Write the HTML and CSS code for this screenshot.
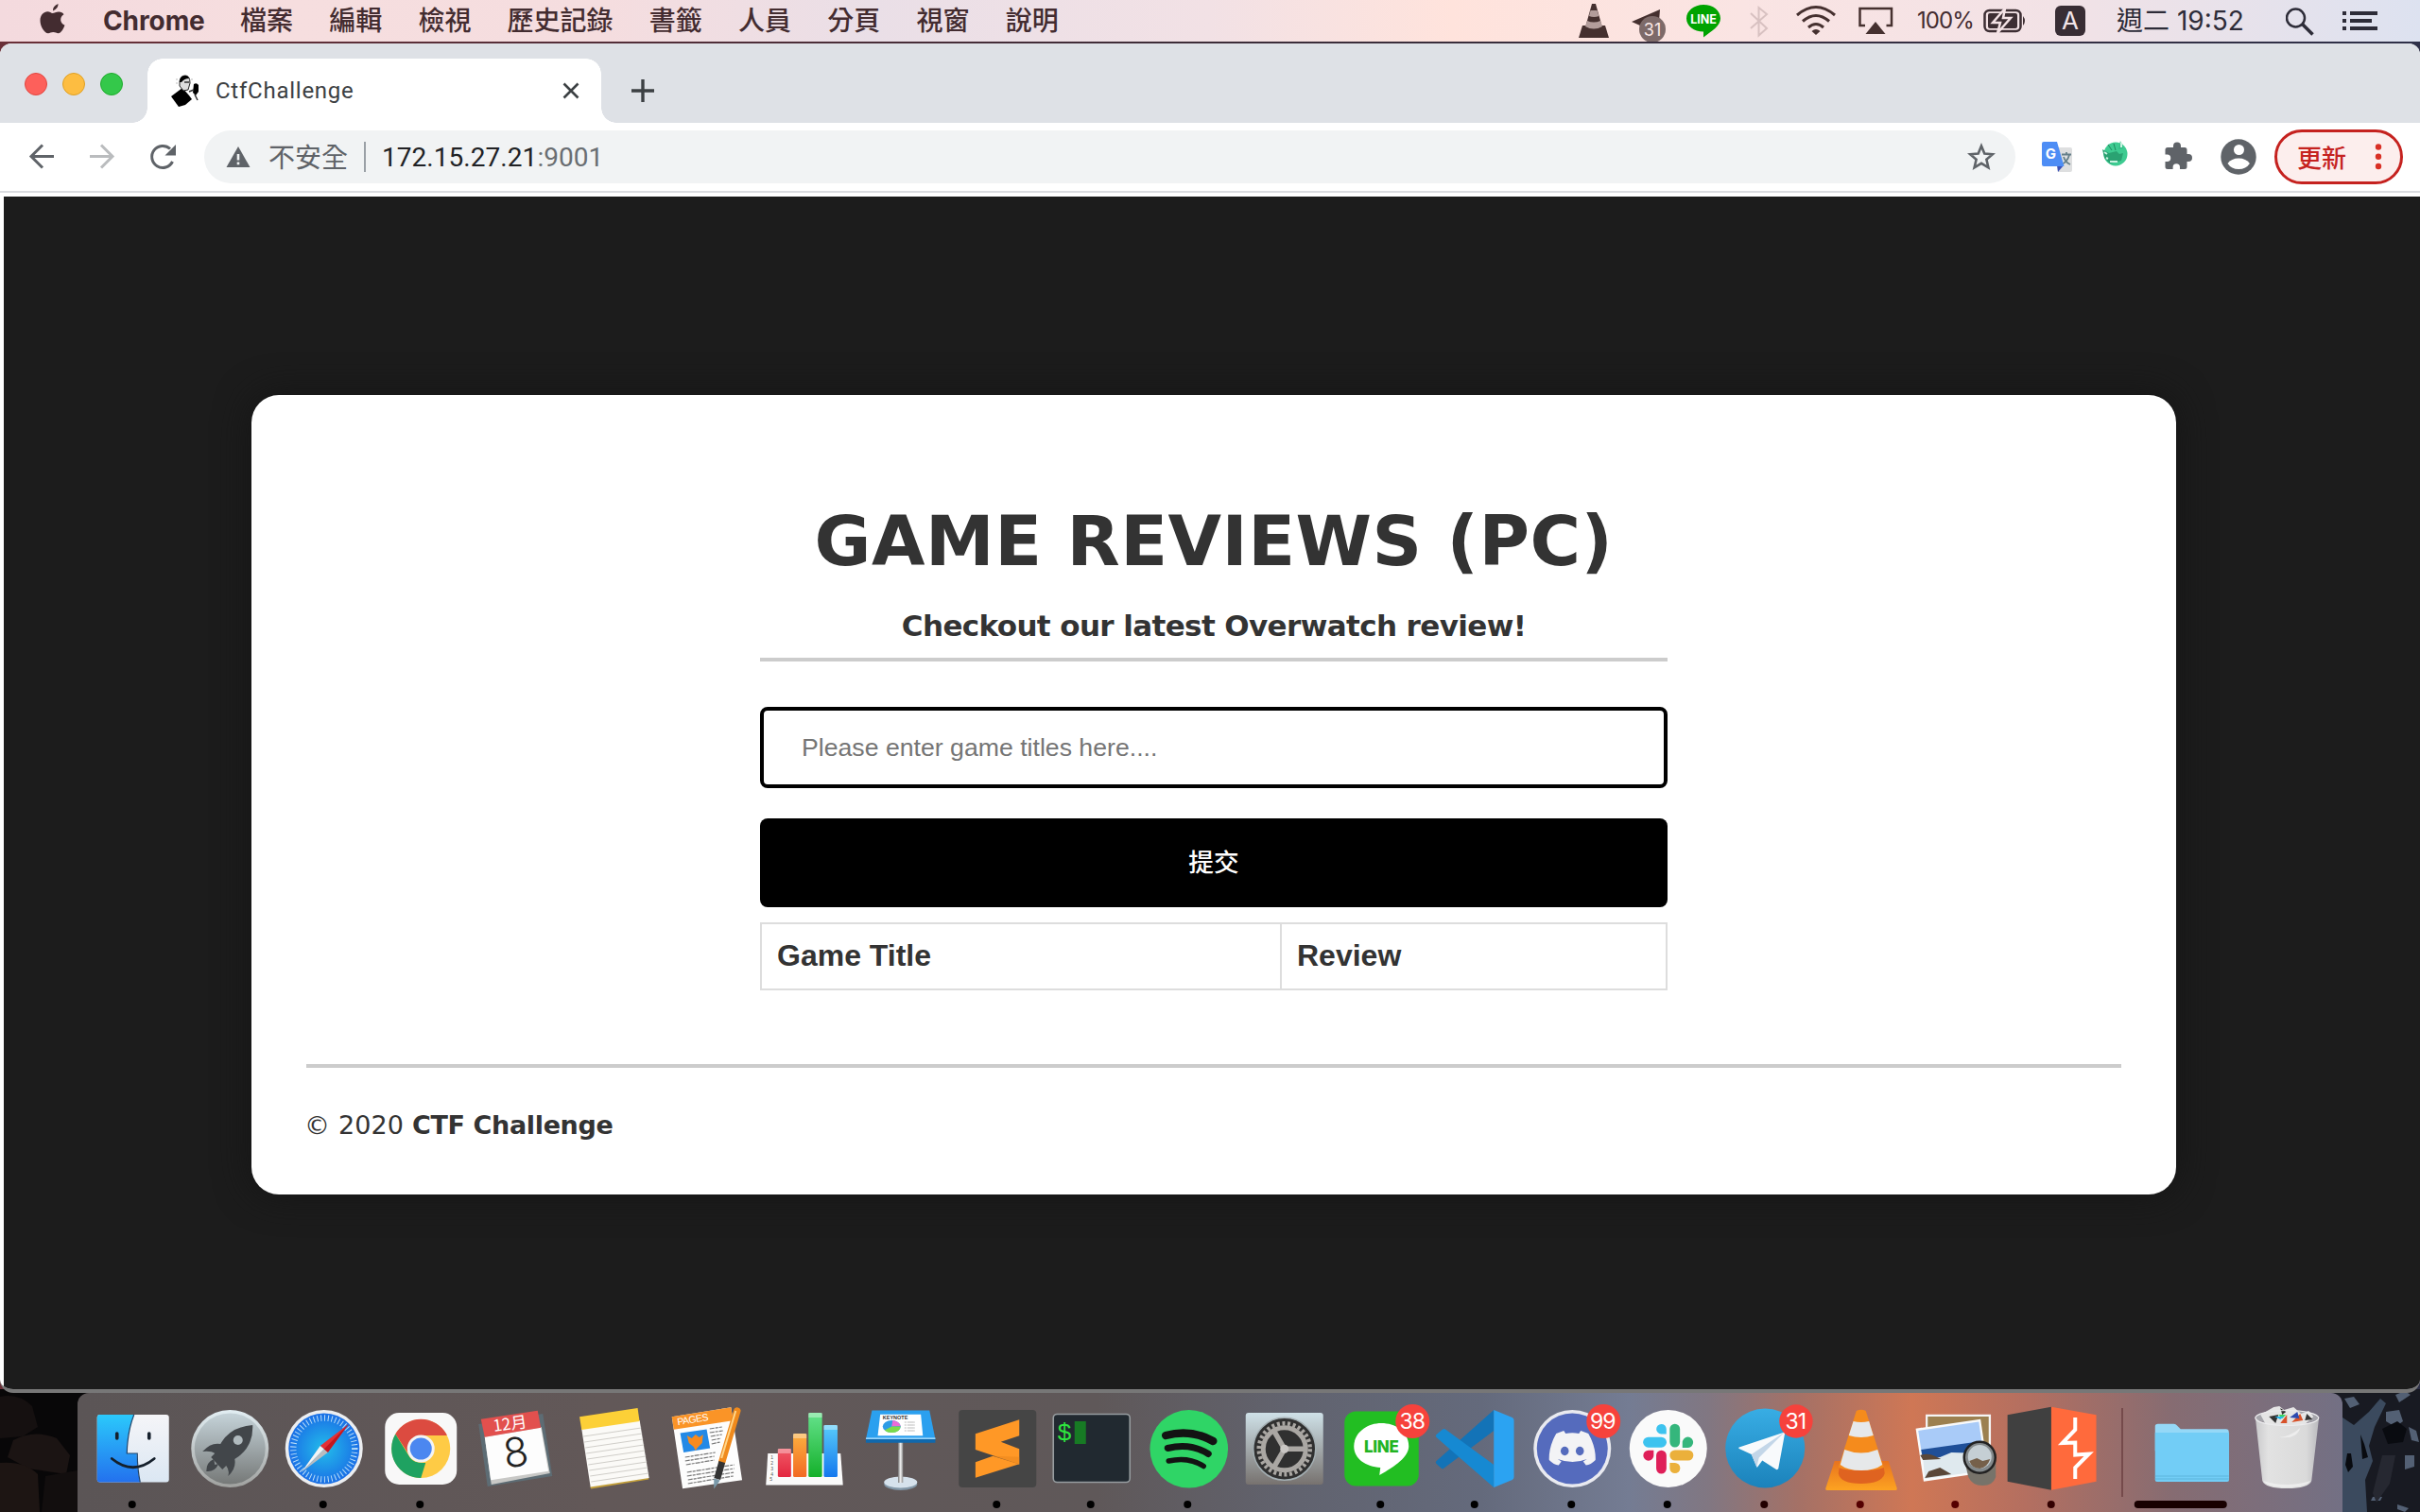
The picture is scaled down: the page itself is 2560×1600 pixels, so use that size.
FILE: index.html
```html
<!DOCTYPE html>
<html lang="zh-Hant">
<head>
<meta charset="utf-8">
<title>CtfChallenge</title>
<link rel="stylesheet" href="styles.css">
</head>
<body>
<header class="menubar">
  <svg class="mi" width="67" height="44" viewBox="42 0 67 44"><path fill="#432c30" d="M61.500 4q.5 5-5.500 7.500q-.5-5 5.500-7.500zM55.500 14c2 0 4-1.700 7-1.500c2 .1 4 1 5 2.700c-5 3-4 9.500 1 11.600c-1.500 4-4 8.500-6.800 8.500c-2 0-3-1.200-5.400-1.200s-3.500 1.200-5.300 1.200c-4 0-8.500-7.500-8.500-13.500s4-9.500 7.800-9.500c2.200 0 4 1.700 5.200 1.700z"/></svg>
  <b class="app">Chrome</b><span>檔案</span><span>編輯</span><span>檢視</span><span>歷史記錄</span><span>書籤</span><span>人員</span><span>分頁</span><span>視窗</span><span>說明</span>
  <svg class="mi" width="358" height="44" viewBox="1670 0 358 44">
    <g fill="#45302f"><path d="M1674 27h24l4 13h-32z"/><path d="M1684 4h4l7 25q-9 5-18 0z"/><g fill="#b39d9b"><path d="M1682.500 11h7l2 6q-5.500 2-10.500 0z"/><path d="M1679 22q7 3 14 0l2 6q-9 5-18 0z"/></g>
    <path d="M1756 10l-30 13l9 4l11-8-7 9 3 5 12 2z"/></g>
    <circle cx="1748" cy="31" r="14" fill="#7d6a69"/><text x="1748" y="37.500" text-anchor="middle" class="t31">31</text>
    <path fill="#00a300" d="M1802 5c10 0 18 6 18 14.500c0 8-9 13-18 20v-6c-10 0-18-6-18-14s8-14.500 18-14.500z"/><text x="1802" y="24.500" text-anchor="middle" class="tline">LINE</text>
    <path fill="none" stroke="#d8c1c1" stroke-width="2" d="M1852 14l17 16-8.500 7.500v-29.500l8.500 7-17 15"/>
    <g fill="none" stroke="#45302f" stroke-width="3"><path d="M1901 16q20-17 40 0M1907 22.500q14-12 28 0M1913 29q8-7 16 0"/></g><path fill="#45302f" d="M1916.500 33q4.500-4 9 0l-4.500 4z"/>
    <path fill="none" stroke="#45302f" stroke-width="2.500" d="M1973 27h-5.500v-18h33.500v18h-5.500"/><path fill="#45302f" d="M1984 23l10.500 13h-21z"/>
  </svg>
  <span class="pct">100%</span>
  <svg class="mi" width="142" height="44" viewBox="2098 0 142 44">
    <rect x="2099.500" y="11" width="38" height="22" rx="5" fill="none" stroke="#3d2e33" stroke-width="2.500"/><rect x="2103" y="14" width="31" height="16" rx="2" fill="#3d2e33"/><path fill="#3d2e33" d="M2140 17q4 5 0 10z"/><path d="M2121 9l-13 15h8l-3 11 14-16h-8z" fill="#3d2e33" stroke="#f4e2e5" stroke-width="2.500"/>
    <rect x="2174" y="6" width="32" height="32" rx="6" fill="#382d34"/><text x="2190" y="31" text-anchor="middle" class="ta">A</text>
  </svg>
  <span class="clock">週二 19:52</span>
  <svg class="mi" width="142" height="44" viewBox="2418 0 142 44"><circle cx="2428.500" cy="19" r="9.500" fill="none" stroke="#2d2c38" stroke-width="2.500"/><path d="M2435.500 25.500l11 11" stroke="#2d2c38" stroke-width="3.500"/><path stroke="#2d2c38" stroke-width="4" d="M2478 14h4M2486 14h29M2478 22h4M2486 22h23M2478 30h4M2486 30h29"/></svg>
</header>

<main class="window">
  <div class="tabstrip">
    <div class="lights"><i class="red"></i><i class="yellow"></i><i class="green"></i></div>
    <div class="tab">
      <svg width="36" height="36" viewBox="178 78 36 36"><path d="M181 102l12-9 7 8 3 4-7 6-7 2z"/><path d="M190 86q1-6 6-6t5 8l-2 7-5 1-4-5z" fill="#ddd" stroke="#222"/><path d="M190 87q0-8 7-7 3 1 3 3-5 0-8 4z"/><path d="M205 89q3-2 5 1v7l-3 4-3-3z"/><path d="M206 100l3 6M200 97l5-2M195 87l5 0" stroke="#333" stroke-width="1.500"/><path d="M186 84h2M186 88h2M202 84h2" stroke="#bbb"/></svg>
      <span class="tabname">CtfChallenge</span>
      <svg width="18" height="18" viewBox="0 0 18 18"><path d="M1.500 1.500l15 15m0-15l-15 15" stroke="#3c4043" stroke-width="2.600"/></svg>
    </div>
    <svg class="plus" width="24" height="24" viewBox="0 0 24 24"><path d="M12 0v24M0 12h24" stroke="#3c4043" stroke-width="3.400"/></svg>
  </div>
  <div class="toolbar">
    <svg width="216" height="72" viewBox="0 130 216 72" fill="none" stroke-width="3"><path stroke="#5f6368" d="M57 165.500H33.500M45 153.500l-12 12 12 12"/><path stroke="#babcbe" d="M95 165.500h23.500M107 153.500l12 12-12 12"/><path stroke="#5f6368" d="M182.500 171a11.500 11.500 0 1 1-2.500-13.500"/><path fill="#5f6368" d="M186 153v11.500h-11.500z"/></svg>
    <div class="omnibox">
      <svg width="26" height="24" viewBox="0 0 26 24"><path fill="#5f6368" d="M13 1l12.500 22h-25z"/><path stroke="#f1f3f4" stroke-width="2.600" d="M13 9v6.500M13 17.500v2.700"/></svg>
      <span class="unsafe">不安全</span><i class="bar"></i><span class="url">172.15.27.21<em>:9001</em></span>
      <svg class="star" width="30" height="30" viewBox="0 0 30 30"><path fill="none" stroke="#5f6368" stroke-width="2.600" d="M15 3.500l3.300 8 8.700.7-6.600 5.600 2 8.500-7.400-4.500-7.400 4.500 2-8.500-6.600-5.600 8.700-.7z"/></svg>
    </div>
    <svg width="274" height="72" viewBox="2132 130 274 72">
      <path fill="#dedfe0" d="M2174 156h16a2 2 0 0 1 2 2v22a2 2 0 0 1-2 2h-13z"/><path d="M2181 163.500h10M2186 161v3M2189 164q-2 7-8 10M2183 166q2 6 7 8" fill="none" stroke="#66808a" stroke-width="1.800"/><path fill="#3c52b8" d="M2176 175h7l-6 7z"/><path fill="#4d8df5" d="M2162 150h14l7.500 26h-21.500a2 2 0 0 1-2-2v-22a2 2 0 0 1 2-2z"/><text x="2169.500" y="168" text-anchor="middle" class="tg">G</text>
      <circle cx="2238" cy="163" r="12.500" fill="#3ecb91"/><path fill="#2aa272" d="M2224 158l7 4 8-2 3 3 4-1-2 8-12 3-6-6z"/><path fill="#35bd87" d="M2241 158l2-9 3 8z"/><path stroke="#c8f2e0" stroke-width="2" d="M2232 171h8M2244 151v5M2226 161l3 2M2228 167l2 1" fill="none"/><path stroke="#1f8760" d="M2230 153l4 6M2236 152l2 7" fill="none"/>
      <path fill="#5f6368" d="M2293 156h6v-1.500a4 4 0 0 1 8 0v1.500h4a2.500 2.500 0 0 1 2.500 2.500v4.500h1.500a4 4 0 0 1 0 8h-1.500v5.500a2.500 2.500 0 0 1-2.500 2.500h-5v-2a3.700 3.700 0 0 0-7.400 0v2h-5.600a2.500 2.500 0 0 1-2.500-2.500v-5.500h2a3.700 3.700 0 0 0 0-7.500h-2v-5a2.500 2.500 0 0 1 2.500-2.500z"/>
      <circle cx="2368" cy="166" r="18.700" fill="#5f6368"/><circle cx="2368.500" cy="158.500" r="5.500" fill="#fff"/><path fill="#fff" d="M2356.500 173q4-5.500 11.700-5.500t11.700 5.500q-4 6-11.700 6t-11.700-6z"/>
    </svg>
    <div class="update"><span>更新</span><svg width="8" height="30" viewBox="0 0 8 30" fill="#d93025"><circle cx="4" cy="4.500" r="3.200"/><circle cx="4" cy="14.800" r="3.200"/><circle cx="4" cy="25" r="3.200"/></svg></div>
  </div>
  <div class="page">
    <section class="card">
      <div class="col">
        <h1><span>GAME REVIEWS (PC)</span></h1>
        <h2>Checkout our latest Overwatch review!</h2>
        <hr>
        <input class="field" type="text" placeholder="Please enter game titles here....">
        <button class="submit">提交</button>
        <div class="table"><div>Game Title</div><div>Review</div></div>
      </div>
      <hr>
      <footer>© 2020 <b>CTF Challenge</b></footer>
    </section>
  </div>
</main>

<div class="desk">
<svg class="wall" width="82" height="130" viewBox="0 1470 82 130"><path fill="#080708" d="M0 1470h82v130H0z"/><path fill="#151010" d="M0 1478q20-4 34 10l6 22-16 10-24 2z"/><path fill="#1b1413" d="M14 1524q22-12 46-2l14 18-4 20-40-6-22-12z"/><path fill="#1d1513" d="M0 1548q26-2 40 12l2 40H0z"/><path fill="#120e0e" d="M48 1562l34-6v44H44z"/></svg>
<nav class="dock">
<svg viewBox="90.250 1474 101.500 126"><defs><linearGradient id="fb" x2="0" y2="1"><stop stop-color="#2bc9fb"/><stop offset="1" stop-color="#2371ee"/></linearGradient><linearGradient id="fw" x2="0" y2="1"><stop stop-color="#f5f5f8"/><stop offset="1" stop-color="#dbe7f3"/></linearGradient></defs><rect x="103" y="1497" width="76" height="71.500" rx="3" fill="url(#fw)"/><path fill="url(#fb)" d="M106 1497h36q-7 18-7.500 41h10.500q0 16 3.500 30.500h-42.500a3 3 0 0 1-3-3v-65.500a3 3 0 0 1 3-3z"/><path d="M142 1497q-7 18-7.500 41h11q0 16 3 30.500" fill="none" stroke="#23466b" stroke-width="1.200"/><path d="M124 1517v5M158 1517v5" stroke="#15202c" stroke-width="3.600" stroke-linecap="round"/><path d="M118.500 1543.500q22.500 18.500 45 0" fill="none" stroke="#15202c" stroke-width="2.800" stroke-linecap="round"/><circle cx="140" cy="1592" r="4"/></svg>
<svg viewBox="191.750 1474 101.500 126"><defs><linearGradient id="lp" x2="0" y2="1"><stop stop-color="#c5d3d9"/><stop offset="1" stop-color="#767978"/></linearGradient><linearGradient id="lr" x2="0" y2="1"><stop stop-color="#e2eef3"/><stop offset="1" stop-color="#a0a19f"/></linearGradient></defs><circle cx="243" cy="1533" r="41" fill="url(#lr)"/><circle cx="243" cy="1533" r="37.500" fill="url(#lp)"/><path fill="#42464a" d="M267 1508q-24 2-34 20-10-2-19 8 9-1 13 2l-4 4 12 13 4-4q4 5 2 11 9-8 7-18 20-12 19-36z"/><path fill="#42464a" d="M226 1544q-8 3-8 13 9 1 13-8l-4 1z"/><circle cx="251.500" cy="1524" r="5" fill="#b0babe"/></svg>
<svg viewBox="293.250 1474 101.500 126"><defs><radialGradient id="sf"><stop stop-color="#23bdea"/><stop offset="1" stop-color="#1a6fe6"/></radialGradient></defs><circle cx="343" cy="1533" r="41" fill="#eceef0"/><circle cx="343" cy="1533" r="37.500" fill="url(#sf)"/><circle cx="343" cy="1533" r="32.500" fill="none" stroke="#d6eefb" stroke-width="6.500" stroke-dasharray="1 2.830" opacity=".85"/><path fill="#e33035" d="M369 1507l-30 23 8 7z"/><path fill="#c3161f" d="M369 1507l-26 26.500 4 3.500z"/><path fill="#f4f4f4" d="M319 1558l20-28 4 3.500z"/><path fill="#b9bcc0" d="M319 1558l24-24.500 4 3.500z"/><circle cx="342" cy="1592" r="4"/></svg>
<svg viewBox="394.750 1474 101.500 126"><rect x="407" y="1495" width="76" height="76" rx="15" fill="#f8f8f8"/><circle cx="445" cy="1533" r="31" fill="#fecb45"/><path fill="#dc4b40" d="M418 1517.500a31 31 0 0 1 54 0l.5 1.500h-27.500l-12 21z"/><path fill="#1fa261" d="M418 1517.500l15.500 25q4 6 16.500 5.500l-5 16a31 31 0 0 1-27-46.500z"/><circle cx="445" cy="1533" r="14.500" fill="#f4f4f4"/><circle cx="445" cy="1533" r="11.500" fill="#4b87f0"/><circle cx="444" cy="1592" r="4"/></svg>
<svg viewBox="496.250 1474 101.500 126"><path fill="#5d6c74" d="M506.500 1507l68-11 10 66-68.500 11z"/><path fill="#c8c8c6" d="M513 1520l60-10 9 49-62 12z"/><path fill="#fdfdfd" d="M513 1520.700l59.400-10 8 46-61 9.600z"/><path fill="#e2504e" d="M509 1501.700l60-9 3.400 18-59.400 10z"/><g transform="rotate(-8 546 1530)"><text x="543" y="1512" text-anchor="middle" class="cm">12月</text><text x="545" y="1552" text-anchor="middle" class="cd">8</text></g></svg>
<svg viewBox="597.750 1474 101.500 126"><path fill="#c4a03a" d="M624 1573l62-9.500 0 2-61 10z"/><path fill="#fbfaf7" d="M615 1512l61.400-9 10 61-62 9.500z"/><path fill="#fcd037" d="M612.800 1499.300l61.500-9.300 2 14-61.300 9z"/><path d="M617 1520l61-9M618 1526l61-9M619 1532l61-9M620 1538l61-9M621 1544l61-9M622 1550l61-9M623 1556l61-9M624 1562l61-9M625 1568l61-9" stroke="#d0cec9"/></svg>
<svg viewBox="699.250 1474 101.500 126"><path fill="#fdfdfd" d="M711 1499.300l62.600-10 11.700 77-63 9z"/><path fill="#fa9427" d="M711 1499.300l62.600-10 2 14-62.600 9.500z"/><text transform="rotate(-9 718 1507)" x="717" y="1508" class="pg">PAGES</text><path fill="#2389e6" d="M719.800 1516.500l28-4 3.600 20-28 4.500z"/><path fill="#f78a1d" d="M727 1519l5 3 4-4 4 3 4-3-1 9-5 5-2 3-2-4-5-4z"/><path stroke="#777" stroke-width="1.200" stroke-dasharray="5 1 3 1" d="M751 1512l13-2M751 1516l14-2M752 1520l12-2M753 1524l10-2M753 1528l9-2M725 1542l32-5M725 1546l31-5M726 1550l30-5M727 1558l50-8M727 1562l50-8M728 1566l49-8M728 1570l48-8"/><path d="M780 1493l-16 54" stroke="#f08a1c" stroke-width="7.500" stroke-linecap="round"/><path d="M778.500 1493l-15 50" stroke="#ffd68a" stroke-width="2"/><path d="M764 1547l-5 18" stroke="#333" stroke-width="7"/><path fill="#7a99aa" d="M755.500 1564.500l6.500 2-6.500 9z"/></svg>
<svg viewBox="800.750 1474 101.500 126"><defs><linearGradient id="nr" x2="0" y2="1"><stop stop-color="#f05a66"/><stop offset="1" stop-color="#e3263f"/></linearGradient><linearGradient id="no" x2="0" y2="1"><stop stop-color="#fcb03f"/><stop offset="1" stop-color="#f26a23"/></linearGradient><linearGradient id="ng" x2="0" y2="1"><stop stop-color="#65e28c"/><stop offset="1" stop-color="#14b02a"/></linearGradient><linearGradient id="nb" x2="0" y2="1"><stop stop-color="#59ccfa"/><stop offset="1" stop-color="#1478ee"/></linearGradient></defs><path fill="#fafafa" d="M812 1538h77l2.500 33.500h-81.500z"/><text class="nn"><tspan x="815" y="1544">1</tspan><tspan x="815" y="1550">2</tspan><tspan x="815" y="1556">3</tspan><tspan x="815" y="1562">4</tspan><tspan x="814" y="1567">5</tspan></text><rect x="822.600" y="1533" width="14" height="30" rx="1.500" fill="url(#nr)"/><rect x="838.800" y="1517" width="14.200" height="46" rx="1.500" fill="url(#no)"/><rect x="855" y="1495" width="14.400" height="68" rx="1.500" fill="url(#ng)"/><rect x="871.200" y="1508" width="14.500" height="55" rx="1.500" fill="url(#nb)"/><path opacity=".35" fill="#fff" d="M822.600 1533h14v5h-14zM838.800 1517h14.200v5h-14.200zM855 1495h14.400v5h-14.400zM871.200 1508h14.500v5h-14.500z"/></svg>
<svg viewBox="902.250 1474 101.500 126"><defs><linearGradient id="kn"><stop stop-color="#777"/><stop offset=".5" stop-color="#f2f2f2"/><stop offset="1" stop-color="#888"/></linearGradient></defs><ellipse cx="953" cy="1570.500" rx="17.500" ry="6.500" fill="#8398a8"/><ellipse cx="953" cy="1568.500" rx="17.500" ry="6" fill="#d6e2ec"/><rect x="950.300" y="1526" width="5.200" height="43" fill="url(#kn)"/><path fill="#1068ac" d="M916.200 1522h73.500v4.700h-73.500z"/><path fill="#2ba0ef" d="M922.700 1492.500h60.800l6.200 30.500h-73.500z"/><path fill="#bfe6fd" d="M916.200 1521.500h73.500v1.200h-73.500z"/><path fill="#fff" d="M931.400 1496.700h43l2.100 22.600h-47.700z"/><text x="934" y="1502" class="kt">KEYNOTE</text><ellipse cx="943.500" cy="1509.500" rx="9.500" ry="6.500" fill="#2d9ce6"/><path fill="#ea6ad8" d="M943.500 1509.500l1-6.500q7 1 8.500 6z"/><path fill="#7cda4b" d="M943.500 1509.500h9.500q-1 7-9.500 6.500-5 0-7.500-2.500z"/><path stroke="#bbb" stroke-dasharray="2 1 7 0" d="M957 1505h11M957 1508h11M957 1511h11M957 1514h11"/></svg>
<svg viewBox="1003.750 1474 101.500 126"><rect x="1014" y="1492" width="82" height="82" rx="4" fill="#454545"/><path fill="#ff9826" d="M1078 1502.300l-46.400 15v16.700l46.400 15.500v-16.200l-19.500-7.600 19.500-6.400z"/><path fill="#ff9826" d="M1031.600 1547.300l18.400-6.500 28 8.500-46.400 14.500z"/><path fill="#e8841c" d="M1050 1540.800l28 9 0-8z" opacity=".5"/><circle cx="1054" cy="1592" r="4"/></svg>
<svg viewBox="1105.250 1474 101.500 126"><rect x="1114.500" y="1496.500" width="81" height="72" rx="4" fill="#212930" stroke="#979da0" stroke-width="1.600"/><text x="1118.500" y="1524" class="sh">$</text><path fill="#177a24" d="M1137 1504h12v24h-12z"/><circle cx="1154" cy="1592" r="4"/></svg>
<svg viewBox="1206.750 1474 101.500 126"><circle cx="1257.500" cy="1533.300" r="41.300" fill="#2fd566"/><g fill="none" stroke="#131313" stroke-linecap="round"><path stroke-width="8.500" d="M1233 1519q27-7 50 6"/><path stroke-width="7" d="M1235 1532.500q24-6 43 6"/><path stroke-width="5.500" d="M1236 1546q21-5 37 5.500"/></g><circle cx="1256" cy="1592" r="4"/></svg>
<svg viewBox="1308.250 1474 101.500 126"><defs><linearGradient id="sp" x2="0" y2="1"><stop stop-color="#cfe1e8"/><stop offset="1" stop-color="#77726f"/></linearGradient></defs><rect x="1318" y="1495" width="82" height="76" rx="3" fill="url(#sp)"/><circle cx="1359" cy="1533.300" r="33" fill="#303030" stroke="#a4afb3" stroke-width="1.500"/><circle cx="1359" cy="1533.300" r="27" fill="none" stroke="#aaa7a3" stroke-width="4.500" stroke-dasharray="3 2.655"/><circle cx="1359" cy="1533.300" r="22.500" fill="none" stroke="#aaa7a3" stroke-width="5"/><path stroke="#aaa7a3" stroke-width="5.500" d="M1359 1533.300h22M1359 1533.300l-11-19M1359 1533.300l-11 19"/><circle cx="1359" cy="1533.300" r="4.500" fill="#c9c6c3"/></svg>
<svg viewBox="1409.750 1474 101.500 126"><rect x="1422" y="1493.500" width="78.500" height="79" rx="12" fill="#22be22"/><path fill="#fff" d="M1461 1506c17 0 29 10.500 29 24.500 0 11-14 21-31 30.500l1-8c-15-1-28-9-28-22.500s13-24.500 29-24.500z"/><text x="1461" y="1536.500" text-anchor="middle" class="ln">LINE</text><circle cx="1494" cy="1504" r="18" class="bdg"/><text x="1493.500" y="1512" text-anchor="middle" class="bt">38</text><circle cx="1460" cy="1592" r="4"/></svg>
<svg viewBox="1511.250 1474 101.500 126"><path fill="#1373b7" d="M1580.500 1492v22l-53.300 40q-1.500 1-3-1l-4.400-4q-1.500-1.500 0-3z"/><path fill="#1689d2" d="M1519.800 1518l6.500-5.500q2-1 3.700.5l50.500 37v24l-60.700-53q-1.500-1.500 0-3z"/><path fill="#2ba3f2" d="M1580.500 1492l19.500 8q1.800 1 1.800 3v60q0 2-1.800 3l-19.500 8z"/><circle cx="1560" cy="1592" r="4"/></svg>
<svg viewBox="1612.750 1474 101.500 126"><circle cx="1663" cy="1533" r="41" fill="#e9eaf0"/><circle cx="1663" cy="1533" r="37.500" fill="#556bbd"/><path fill="#f3f3f5" d="M1646 1517l8-3 2 3q7-1.500 14 0l2-3 8 3q8 14 7.500 28-5 5-10 5.500l-3-4 4-2.500q-15 6-31 0l4 2.500-3 4q-5-.5-10-5.500-.5-14 7.500-28z"/><g fill="#556bbd"><ellipse cx="1655" cy="1535.500" rx="4.300" ry="4.700"/><ellipse cx="1671" cy="1535.500" rx="4.300" ry="4.700"/></g><circle cx="1696" cy="1504" r="18" class="bdg"/><text x="1695" y="1512" text-anchor="middle" class="bt">99</text><circle cx="1662" cy="1592" r="4"/></svg>
<svg viewBox="1714.250 1474 101.500 126"><circle cx="1765" cy="1533" r="41" fill="#fafafa"/><g fill="#35b67c"><rect x="1766.600" y="1506.700" width="10.800" height="24.800" rx="5.400"/><path d="M1780 1532v-6a5.700 5.700 0 1 1 6 6z"/></g><g fill="#3dc3ef"><rect x="1738.400" y="1520.700" width="24.800" height="11" rx="5.500"/><path d="M1763 1517.500h-5.500a5.300 5.300 0 1 1 5.500-5.500z"/></g><g fill="#df1f59"><rect x="1752.300" y="1534.700" width="10.800" height="24.800" rx="5.400"/><path d="M1749.600 1534.700v5.500a5.500 5.500 0 1 1-5.500-5.500z"/></g><g fill="#ebb03b"><rect x="1766.600" y="1534.500" width="25" height="11" rx="5.500"/><path d="M1766.600 1548h5.500a5.500 5.500 0 1 1-5.500 5.500z"/></g><circle cx="1764" cy="1592" r="4"/></svg>
<svg viewBox="1815.750 1474 101.500 126"><defs><linearGradient id="tg" x2="0" y2="1"><stop stop-color="#38ade4"/><stop offset="1" stop-color="#1b82bb"/></linearGradient></defs><circle cx="1867" cy="1532.500" r="42" fill="url(#tg)"/><path fill="#f8fafc" d="M1887.500 1515.500q1-1.500.5.500l-7 38q-1 2-3 .5l-14-9-5.500 7.500-6-14-13-6q-1-1 0-1.500z"/><path fill="#c3d6e8" d="M1852.500 1539l35-23.500-27 27-2.500 10z"/><circle cx="1899.700" cy="1504" r="17.700" class="bdg"/><text x="1899" y="1512" text-anchor="middle" class="bt">31</text><circle cx="1866" cy="1592" r="4" fill="#200"/></svg>
<svg viewBox="1917.250 1474 101.500 126"><defs><linearGradient id="vl" x2="0" y2="1"><stop stop-color="#e8731e"/><stop offset="1" stop-color="#fda321"/></linearGradient></defs><path fill="url(#vl)" d="M1941 1546h57l9 29q.4 2-1.500 2h-72.500q-2 0-1.500-2z"/><path fill="#df6320" d="M1946 1553l-1 6q2 11 24 11t25-11l-1-6z"/><path fill="#f58b1c" d="M1964 1493q5-2.500 10 0l19 60q-6 3-24 3t-24-3z"/><path fill="#e6e8ea" d="M1960.800 1504q8 2 16.600 0l4.600 15q-13 4-26 0zM1951.500 1534q17.500 7 35 0l5 16q-8 6-22.500 6t-22-6z"/><circle cx="1968" cy="1592" r="4" fill="#500"/></svg>
<svg viewBox="2018.750 1474 101.500 126"><path fill="#f5f5f5" d="M2036.800 1496.700h69v43h-69z"/><path fill="#9c8050" d="M2039 1499h64.500v39h-64.500z"/><path fill="#fafafa" d="M2026.300 1511.700l68.600-10 8.100 56-68.300 10z"/><path fill="#a9cbf8" d="M2029 1514l64-9.500 4 27-64 9z"/><path fill="#1f4f98" d="M2032 1534l64-9 2 14-64 6z"/><path fill="#dfe9ee" d="M2034 1544l18-2 12-5 34 1 2 18-64 9z"/><path fill="#5a4738" d="M2031 1540q8-3 16 1l6 3-19 1zM2036 1564l4-7 12-4 12 7zM2080 1534h17v4z"/><path fill="#77736a" d="M2078 1546h33v17q-3 9-14 9t-15-9z"/><circle cx="2094" cy="1542.300" r="16.500" fill="#83898b" stroke="#222" stroke-width="2.500"/><circle cx="2094" cy="1541.500" r="12.500" fill="#c5cfd4"/><path fill="#75604a" d="M2083 1546l8-3 6 3 8-2q-3 9-11 10-8 0-11-8z"/><circle cx="2068" cy="1592" r="4" fill="#500"/></svg>
<svg viewBox="2120.250 1474 101.500 126"><path fill="#404040" d="M2123.900 1497.300l46.300-8.600v88l-46.300-9z"/><path fill="#ff6a3c" d="M2217.800 1497.300l-47.600-8.600v88l47.600-9z"/><path fill="none" stroke="#fff" stroke-width="4" d="M2195.500 1500v13l-13.500 14 13.500-.5v13l14.500-1-14.500 14.500v12"/><circle cx="2170" cy="1592" r="4" fill="#300"/></svg>
<i class="sep"></i>
<svg viewBox="2268.250 1474 101.500 126"><path fill="#95d8f7" d="M2283 1506.700h17q2 0 3 1.500l4 4h48q3 0 3 3v20h-78v-26q0-2.500 3-2.500z"/><path fill="#72cdf6" d="M2280 1516h78.300v50q0 2-2 2h-74.300q-2 0-2-2z"/><path stroke="#5db5dc" d="M2280 1562h78M2280 1565h78"/><rect x="2258" y="1588" width="98" height="8" rx="4" fill="#180000"/></svg>
<svg viewBox="2369.750 1474 101.500 126"><defs><linearGradient id="tr"><stop stop-color="#c8c8ca"/><stop offset=".2" stop-color="#e2e2e2"/><stop offset=".8" stop-color="#dadada"/><stop offset="1" stop-color="#b9b9bd"/></linearGradient></defs><ellipse cx="2419" cy="1500" rx="33" ry="7.500" fill="#a6a6ac"/><path fill="#e5e5e5" d="M2391 1497l14-8 6-1 5 4 10-3 8 7 8-3 5 6-10 9h-40z"/><path fill="#333" d="M2400 1499l10-2-3 9zM2412 1490l6 4-4 3zM2440 1496l6 6-8 1z"/><path fill="#3dd55b" d="M2410 1497h8l-4 4z"/><path fill="#22b7ee" d="M2406 1499h10l-4 3z"/><path fill="#d8522a" d="M2412 1506l7-9v9zM2424 1505l9-9 3 7z"/><path fill="#2c4ab0" d="M2422 1500l8-6 2 7z"/><path fill="url(#tr)" d="M2385.500 1499q4 9 33.500 9t34-9l-8 68q-3 8-26 8t-26-8z"/><path fill="#f3f3f3" opacity=".7" d="M2411 1521q12-1 22-10-3 12-22 10zM2394 1567q24 8 50 0-4 7-25 7t-25-7z"/><ellipse cx="2419" cy="1500.500" rx="33.500" ry="8" fill="none" stroke="#ececee" stroke-width="1.200"/></svg>
</nav>
<svg class="wall" width="82" height="130" viewBox="2478 1470 82 130"><path fill="#181a22" d="M2478 1470h82v130h-82z"/><path fill="#3b4a5e" d="M2478 1500l12 8 16-14 12-14 6 5-12 25-6 20 4 16-8 20 2 34h-26z"/><path fill="#536074" d="M2524 1494l14-2 4 12-8 6-10-6zM2480 1480l10-2 6 8-10 4zM2544 1540l10 0 0 12-10 3zM2534 1476l10-4 6 4-12 8zM2548 1510l8 4 3 12-8-2zM2510 1584l10 0-2 4-10 0zM2536 1592l12 4-4 4-8-3z"/><path fill="#090b10" d="M2483 1538h4l2 14-5 6-3-8zM2497 1518l4 10 4 14-6 2zM2520 1512l16-8 10 8-4 14-16 2z"/><path fill="#262831" d="M2520 1540l14 0-6 30-14 20-4-10z"/></svg>
</div>
</body>
</html>
```
FILE: styles.css
```css
* { box-sizing: border-box; }
body { margin: 0; width: 2560px; height: 1600px; overflow: hidden; background: linear-gradient(90deg, #6a3038, #3c2c38 50%, #2e3048); font-family: "Liberation Sans", "Noto Sans CJK TC", sans-serif; display: flex; flex-direction: column; }
svg { display: block; flex: none; }

.menubar { height: 44px; flex: none; display: flex; align-items: center; padding-left: 42px; white-space: nowrap; background: linear-gradient(90deg, #f4dade, #f6dedf 12%, #f5dddf 25%, #eadfe7 36%, #f2e1e5 50%, #ffe3dc 60%, #fae4e3 72%, #f2e2e6 85%, #dde2f0); color: #432c30; font: 28px "Inter", "Noto Sans CJK TC", sans-serif; line-height: 44px; }
.menubar .app { width: 145px; font-size: 28px; letter-spacing: -.1px; }
.menubar span { margin-right: 38.200px; font-weight: 500; }
.menubar .mi { flex: none; }
.menubar span:nth-of-type(9) { margin-right: auto; }
.menubar .pct { width: 70px; margin: 0; font-size: 24px; font-weight: 400; letter-spacing: -.9px; }
.menubar .clock { width: 179px; margin: 0 0 0 -1px; color: #2d2c38; font-weight: 400; letter-spacing: 0; }
.t31 { font: 18px "Inter", sans-serif; fill: #fbe9e7; }
.tline { font: bold 12.500px "Inter", sans-serif; fill: #fff; }
.ta { font: 26px "Inter", sans-serif; fill: #f2e4e8; }

.window { flex: none; height: 1428px; margin-top: 2px; border-radius: 12px 12px 14px 14px; overflow: hidden; background: #fff; display: flex; flex-direction: column; border-bottom: 4px solid #777; z-index: 1; }
.tabstrip { height: 84px; flex: none; background: #dee1e6; display: flex; align-items: flex-end; }
.lights { width: 140px; height: 84px; padding: 31px 0 0 26px; display: flex; gap: 16px; }
.lights i { width: 24px; height: 24px; border-radius: 50%; }
.red { background: #fd605b; border: 1px solid #e2463f; }
.yellow { background: #fdbd41; border: 1px solid #dfa023; }
.green { background: #34c84a; border: 1px solid #1fac2c; }
.tab { width: 512px; height: 68px; padding: 0 39px 0 38px; display: flex; align-items: center; background: radial-gradient(circle at 0 0, transparent 15.500px, #fff 16px) 0 100% / 16px 16px no-repeat, radial-gradient(circle at 100% 0, transparent 15.500px, #fff 16px) 100% 100% / 16px 16px no-repeat, linear-gradient(#fff, #fff) 50% 100% / 480px 52px no-repeat, radial-gradient(circle at 100% 100%, #fff 15.500px, transparent 16px) 16px 0 / 16px 16px no-repeat, radial-gradient(circle at 0 100%, #fff 15.500px, transparent 16px) 480px 0 / 16px 16px no-repeat, linear-gradient(#fff, #fff) 50% 0 / 448px 68px no-repeat; }
.tabname { flex: 1; margin-left: 14px; font: 24px Roboto, sans-serif; letter-spacing: .750px; color: #3c4043; }
.plus { margin: 0 0 22px 16px; }
.toolbar { height: 74px; flex: none; display: flex; align-items: center; border-bottom: 2px solid #dadce0; }
.omnibox { width: 1916px; height: 56px; border-radius: 28px; background: #f1f3f4; display: flex; align-items: center; padding: 0 21px 0 23px; }
.unsafe { margin: -2px 0 0 19px; font: 28px/56px "Noto Sans CJK TC", sans-serif; color: #5f6368; width: 86px; }
.bar { width: 2px; height: 32px; background: #9aa0a6; margin: 0 17px 0 15px; }
.url { font: 28px Roboto, sans-serif; color: #202124; letter-spacing: .050px; }
.url em { font-style: normal; color: #6a6e72; }
.star { margin-left: auto; }
.update { width: 136px; height: 58px; border: 3px solid #c5221f; border-radius: 29px; background: #fceeed; color: #c5221f; display: flex; align-items: center; gap: 30px; padding-left: 21px; font: 500 26px/50px "Noto Sans CJK TC", sans-serif; }

.page { flex: 1; margin: 4px 0 0 4px; background: #1c1c1c; padding: 210px 0 0 262px; font-family: Verdana, "DejaVu Sans", sans-serif; color: #333; }
.card { width: 2036px; height: 846px; background: #fff; border-radius: 29px; padding: 0 58px; box-shadow: 0 0 36px 2px #161616; }
.col { width: 960px; height: 708px; margin: 0 auto; display: flex; flex-direction: column; padding-top: 112px; }
hr { margin: 0; border: 0; height: 4px; background: #ccc; width: 100%; flex: none; }
h1 { margin: 0; font-size: 73px; line-height: 86px; white-space: nowrap; text-align: center; letter-spacing: .500px; }
h2 { margin: 22px 0 0; font-size: 31px; line-height: 48px; text-align: center; white-space: nowrap; letter-spacing: -.620px; }
.col hr { margin-top: 10px; }
.field { margin-top: 48px; height: 86px; border: 4px solid #000; border-radius: 8px; padding: 0 40px; font: 26.670px "Liberation Sans", sans-serif; outline: 0; flex: none; }
.field::placeholder { color: #757575; opacity: 1; }
.submit { margin-top: 32px; height: 94px; flex: none; border: 0; border-radius: 8px; background: #000; color: #fff; font: 500 26.670px "Noto Sans CJK TC", sans-serif; padding: 0 0 5px; }
.table { margin-top: 16px; height: 72px; border: 2px solid #ddd; display: grid; grid-template-columns: 548px 1fr; font: bold 32px/66px "Liberation Sans", sans-serif; }
.table div { padding-left: 16px; }
.table div + div { border-left: 2px solid #ddd; }
footer { font-size: 27px; line-height: 40px; margin: 41px 0 0 -2px; white-space: nowrap; letter-spacing: .150px; }
footer b { letter-spacing: -.350px; }

.desk { height: 126px; display: flex; align-items: flex-end; background: linear-gradient(90deg, #080708 50%, #181a22 50%); }
.dock { width: 2396px; height: 126px; padding-left: 8.250px; display: flex; border-radius: 12px 12px 0 0; background: linear-gradient(90deg, #5b5556, #625858 23%, #5f5859 45%, #61636f 54%, #646a7c 62%, #747c93 68.500%, #817782 72%, #a57166 76%, #cf7755 81%, #b46f60 86%, #866c72 92.500%, #737084); }
.dock svg { width: 101.500px; height: 126px; overflow: visible; }
.sep { width: 2px; height: 94px; margin: 16px 22.250px 0 22.250px; background: #754a4b; }
.wall { margin-top: -4px; }
.bdg { fill: #f6423c; }
.bt { font: 23px "Inter", sans-serif; fill: #fff; letter-spacing: -1px; }
.ln { font: 800 17px "Inter", sans-serif; fill: #22b422; letter-spacing: -.4px; }
.cm { font: 17px "Noto Sans CJK TC", sans-serif; fill: #fff; }
.cd { font: 300 43px "Inter", sans-serif; fill: #222; }
.pg { font: 10.500px "Liberation Sans", sans-serif; fill: #fff; letter-spacing: -.5px; }
.nn { font: 5px "Liberation Sans", sans-serif; fill: #555; }
.kt { font: bold 5.500px "Liberation Sans", sans-serif; fill: #333; }
.sh { font: 26px "Liberation Mono", monospace; fill: #2ee53e; }
.tg { font: bold 15px "Inter", sans-serif; fill: #fff; }
```
